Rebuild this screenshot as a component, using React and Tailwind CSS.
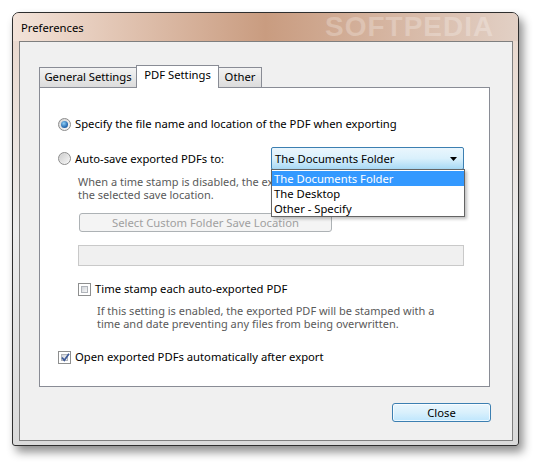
import React from 'react';

const Radio = ({ checked }) => (
    <span className="w-[13px] h-[13px] rounded-full border border-[#8c8c8c] bg-gradient-to-br from-[#d2d2d2] to-[#fbfbfb] flex items-center justify-center shrink-0">
        {checked ? (
            <span className="w-[7px] h-[7px] rounded-full bg-[radial-gradient(circle_at_40%_35%,#8fd0f6,#2a6db3_60%,#1b4f8c)]" />
        ) : (
            <span className="w-[9px] h-[9px] rounded-full bg-gradient-to-br from-[#cfcfcf] to-[#f4f4f4]" />
        )}
    </span>
);

const Check = ({ checked }) => (
    <span className="w-[13px] h-[13px] border border-[#8e8f8f] bg-white p-[2px] shrink-0 relative">
        <span className="block w-full h-full border border-[#b0b4ba] bg-gradient-to-br from-[#d1d5da] to-[#f7f7f7]" />
        {checked && (
            <svg className="absolute left-[1px] top-[0px]" width="11" height="11" viewBox="0 0 11 11">
                <path d="M2 5.5 L4.3 8.3 L9 1.8" fill="none" stroke="#3d5a98" strokeWidth="1.7" />
            </svg>
        )}
    </span>
);

const Tab = ({ label, active, className }) =>
    active ? (
        <div className={`h-[23px] mb-[-1px] relative z-10 bg-white border border-b-0 border-[#898c95] flex items-start justify-center pt-[3px] text-black ${className}`}>
            {label}
        </div>
    ) : (
        <div className={`h-[20px] bg-gradient-to-b from-[#f3f3f3] to-[#dcdcdc] border border-b-0 border-[#898c95] flex items-start justify-center pt-[3px] text-black ${className}`}>
            {label}
        </div>
    );

export default function App() {
    return (
        <div className="w-[540px] h-[468px] bg-white pl-[12px] pt-[12px] font-['Noto_Sans',sans-serif] text-[11.25px] leading-none">
            {/* Window frame */}
            <div className="w-[507px] h-[434px] relative rounded-t-[7px] rounded-b-[3px] border border-[#2e2e2e] shadow-[4px_6px_10px_rgba(0,0,0,0.45)] bg-gradient-to-b from-[#e9d6ca] via-[#ececec] to-[#dadada] flex flex-col overflow-hidden">
                {/* Title bar */}
                <div className="h-[28px] shrink-0 relative pl-[8px] flex items-center text-black bg-gradient-to-r from-[#f3e3d9] via-[#c99c80] to-[#e2d0c5]">
                    <span className="relative z-10 pt-[2px]">Preferences</span>
                    <span className="absolute left-[312px] top-[0px] text-[28px] font-bold tracking-[1px] text-white/25 font-['Liberation_Sans',sans-serif]">SOFTPEDIA</span>
                </div>

                {/* Client area */}
                <div className="ml-[6px] mr-[5px] w-[494px] h-[400px] border border-[#7f7f7f] bg-[#f0f0f0] pl-[19px] pt-[23px]">
                    {/* Tabs */}
                    <div className="flex items-end h-[22px]">
                        <Tab label="General Settings" className="w-[97px] border-r-0" />
                        <Tab label="PDF Settings" active className="w-[83px]" />
                        <Tab label="Other" className="w-[43px] border-l-0" />
                    </div>

                    {/* Panel */}
                    <div className="w-[451px] h-[300px] bg-white border border-[#898c95] pl-[18px] pt-[28px] text-black">
                        <div className="flex items-center gap-[4px] h-[16px]">
                            <Radio checked />
                            <span>Specify the file name and location of the PDF when exporting</span>
                        </div>

                        <div className="flex items-center h-[23px] mt-[15px]">
                            <div className="w-[213px] flex items-center gap-[4px]">
                                <Radio />
                                <span>Auto-save exported PDFs to:</span>
                            </div>
                            <div className="relative w-[193px] h-[23px]">
                                <div className="h-full rounded-[2px] border border-[#3c7fb1] bg-gradient-to-b from-[#eaf6fd] via-[#d9f0fc] to-[#a7d9f5] flex items-center pl-[3px] pr-[6px] relative z-20">
                                    <span className="flex-1">The Documents Folder</span>
                                    <svg width="7" height="4" viewBox="0 0 7 4">
                                        <path d="M0 0 H7 L3.5 4 Z" fill="#000" />
                                    </svg>
                                </div>
                                {/* Open list */}
                                <div className="absolute left-0 top-[22px] w-[194px] h-[48px] bg-white border border-[#646464] z-20 pt-[1px] shadow-[2px_2px_3px_rgba(0,0,0,0.25)]">
                                    <div className="h-[15px] bg-[#3399ff] text-white flex items-center pl-[2px]">The Documents Folder</div>
                                    <div className="h-[15px] flex items-center pl-[2px]">The Desktop</div>
                                    <div className="h-[15px] flex items-center pl-[2px]">Other - Specify</div>
                                </div>
                            </div>
                        </div>

                        <p className="ml-[20px] mt-[5px] text-[11px] leading-[13px] text-[#5a5a5a] whitespace-nowrap">
                            When a time stamp is disabled, the exported PDF will overwrite files in
                            <br />
                            the selected save location.
                        </p>

                        <button className="ml-[21px] mt-[12px] w-[253px] h-[19px] rounded-[3px] border border-[#adb2b5] bg-[#f4f4f4] text-[#a0a0a0] flex items-center justify-center">
                            Select Custom Folder Save Location
                        </button>

                        <div className="ml-[20px] mt-[13px] w-[386px] h-[21px] border border-[#c9c9c9] bg-[#f0f0f0]" />

                        <div className="ml-[20px] mt-[15px] flex items-center gap-[4px] h-[16px]">
                            <Check />
                            <span>Time stamp each auto-exported PDF</span>
                        </div>

                        <p className="ml-[39px] mt-[7px] text-[11px] leading-[13px] text-[#5a5a5a]">
                            If this setting is enabled, the exported PDF will be stamped with a
                            <br />
                            time and date preventing any files from being overwritten.
                        </p>

                        <div className="mt-[19px] flex items-center gap-[4px] h-[16px]">
                            <Check checked />
                            <span>Open exported PDFs automatically after export</span>
                        </div>
                    </div>

                    {/* Buttons */}
                    <div className="w-[452px] flex justify-end mt-[16px]">
                        <button className="w-[99px] h-[19px] rounded-[3px] border border-[#3c7fb1] bg-gradient-to-b from-[#eaf6fd] via-[#d9f0fc] to-[#bee6fd] shadow-[inset_0_0_0_1px_rgba(255,255,255,0.7)] text-black flex items-center justify-center">
                            Close
                        </button>
                    </div>
                </div>
            </div>
        </div>
    );
}
